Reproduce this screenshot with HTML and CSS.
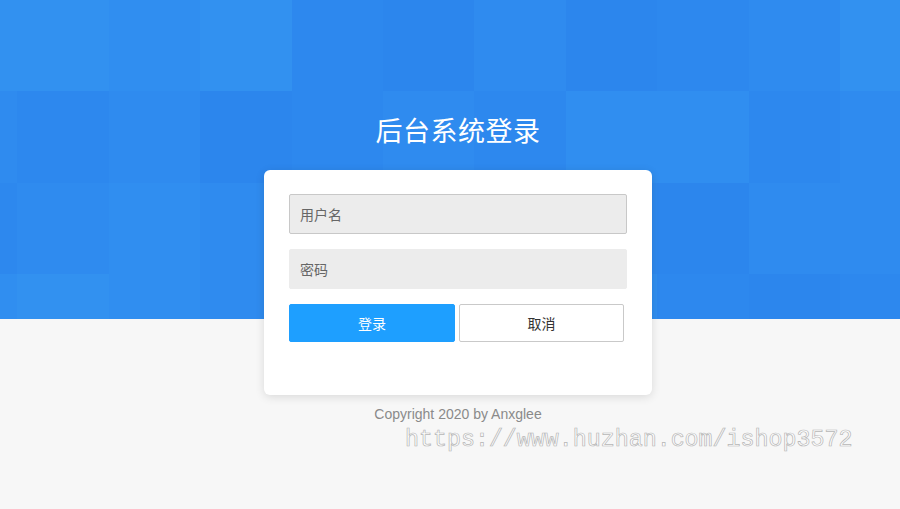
FILE: index.html
```html
<!DOCTYPE html>
<html lang="zh-CN">
<head>
<meta charset="utf-8">
<title>后台系统登录</title>
<link rel="stylesheet" href="styles.css">
</head>
<body>
<div class="page">
  <div class="bg">
    <div class="tiles">
      <i class="c1"></i><i class="c1"></i><i class="c2"></i><i class="c1"></i><i class="c4"></i><i class="c5"></i><i class="c3"></i><i class="c5"></i><i class="c4"></i><i class="c3"></i><i class="c1"></i>
      <i class="c3"></i><i class="c4"></i><i class="c3"></i><i class="c5"></i><i class="c4"></i><i class="c3"></i><i class="c4"></i><i class="c2"></i><i class="c2"></i><i class="c4"></i><i class="c3"></i>
      <i class="c4"></i><i class="c3"></i><i class="c2"></i><i class="c3"></i><i class="c4"></i><i class="c4"></i><i class="c3"></i><i class="c4"></i><i class="c5"></i><i class="c3"></i><i class="c3"></i>
      <i class="c2"></i><i class="c1"></i><i class="c2"></i><i class="c3"></i><i class="c4"></i><i class="c3"></i><i class="c5"></i><i class="c2"></i><i class="c4"></i><i class="c5"></i><i class="c4"></i>
    </div>
  </div>
  <div class="content">
    <h1 class="title">后台系统登录</h1>
    <form class="card">
      <input class="field field-user" type="text" placeholder="用户名">
      <input class="field field-pass" type="password" placeholder="密码">
      <div class="actions">
        <button type="button" class="btn btn-primary">登录</button>
        <button type="button" class="btn btn-default">取消</button>
      </div>
    </form>
    <p class="copyright">Copyright 2020 by Anxglee</p>
  </div>
  <div class="watermark">https://www.huzhan.com/ishop3572</div>
</div>
</body>
</html>
```

FILE: styles.css
```css
* { box-sizing: border-box; }
html, body { margin: 0; padding: 0; }
body {
  width: 900px;
  height: 509px;
  overflow: hidden;
  background: #f7f7f7;
  font-family: "Noto Sans CJK SC", "Liberation Sans", sans-serif;
}
.page {
  position: relative;
  width: 900px;
  height: 509px;
}
.bg {
  position: absolute;
  left: 0;
  top: 0;
  width: 900px;
  height: 319px;
  overflow: hidden;
  background: #2e8aee;
}
.tiles {
  position: absolute;
  left: -74px;
  top: 0;
  display: grid;
  grid-template-columns: repeat(11, 91.4px);
  grid-auto-rows: 91.3px;
}
.tiles i { display: block; }
.c1 { background: #3291f0; }
.c2 { background: #308ef0; }
.c3 { background: #2f8bef; }
.c4 { background: #2d88ee; }
.c5 { background: #2c86ed; }

.content {
  position: relative;
  display: flex;
  flex-direction: column;
  align-items: center;
  padding: 112px 0 0 16px;
}
.title {
  margin: 0 0 22px;
  height: 36px;
  line-height: 36px;
  font-size: 27px;
  font-weight: 400;
  color: #ffffff;
  letter-spacing: 0.5px;
}
.card {
  width: 388px;
  height: 225px;
  margin: 0;
  padding: 24px 25px 0;
  background: #ffffff;
  border-radius: 6px;
  box-shadow: 0 2px 10px rgba(0, 0, 0, 0.12);
  display: flex;
  flex-direction: column;
}
.field {
  display: block;
  width: 338px;
  height: 40px;
  margin: 0 0 15px;
  padding: 0 10px;
  background: #ececec;
  border: 1px solid #ececec;
  border-radius: 2px;
  font-family: "Noto Sans CJK SC", sans-serif;
  font-size: 14px;
  color: #555;
  outline: none;
}
.field-user { border-color: #c8c8c8; }
.field::placeholder { color: #666; }
.actions {
  display: flex;
  gap: 4px;
}
.btn {
  height: 38px;
  border-radius: 2px;
  font-family: "Noto Sans CJK SC", sans-serif;
  font-size: 14px;
  padding: 0;
  cursor: pointer;
}
.btn-primary {
  width: 166px;
  background: #1e9fff;
  border: 1px solid #1e9fff;
  color: #ffffff;
}
.btn-default {
  width: 165px;
  background: #ffffff;
  border: 1px solid #c9c9c9;
  color: #333;
}
.copyright {
  margin: 10px 0 0;
  font-family: "Liberation Sans", Arial, sans-serif;
  font-size: 14px;
  line-height: 18px;
  color: #8a8a8a;
}
.watermark {
  position: absolute;
  left: 405px;
  top: 426px;
  font-family: "Liberation Mono", monospace;
  font-size: 23.3px;
  line-height: 28px;
  color: #ffffff;
  -webkit-text-stroke: 0.7px #b5b5b5;
  white-space: nowrap;
}
```
